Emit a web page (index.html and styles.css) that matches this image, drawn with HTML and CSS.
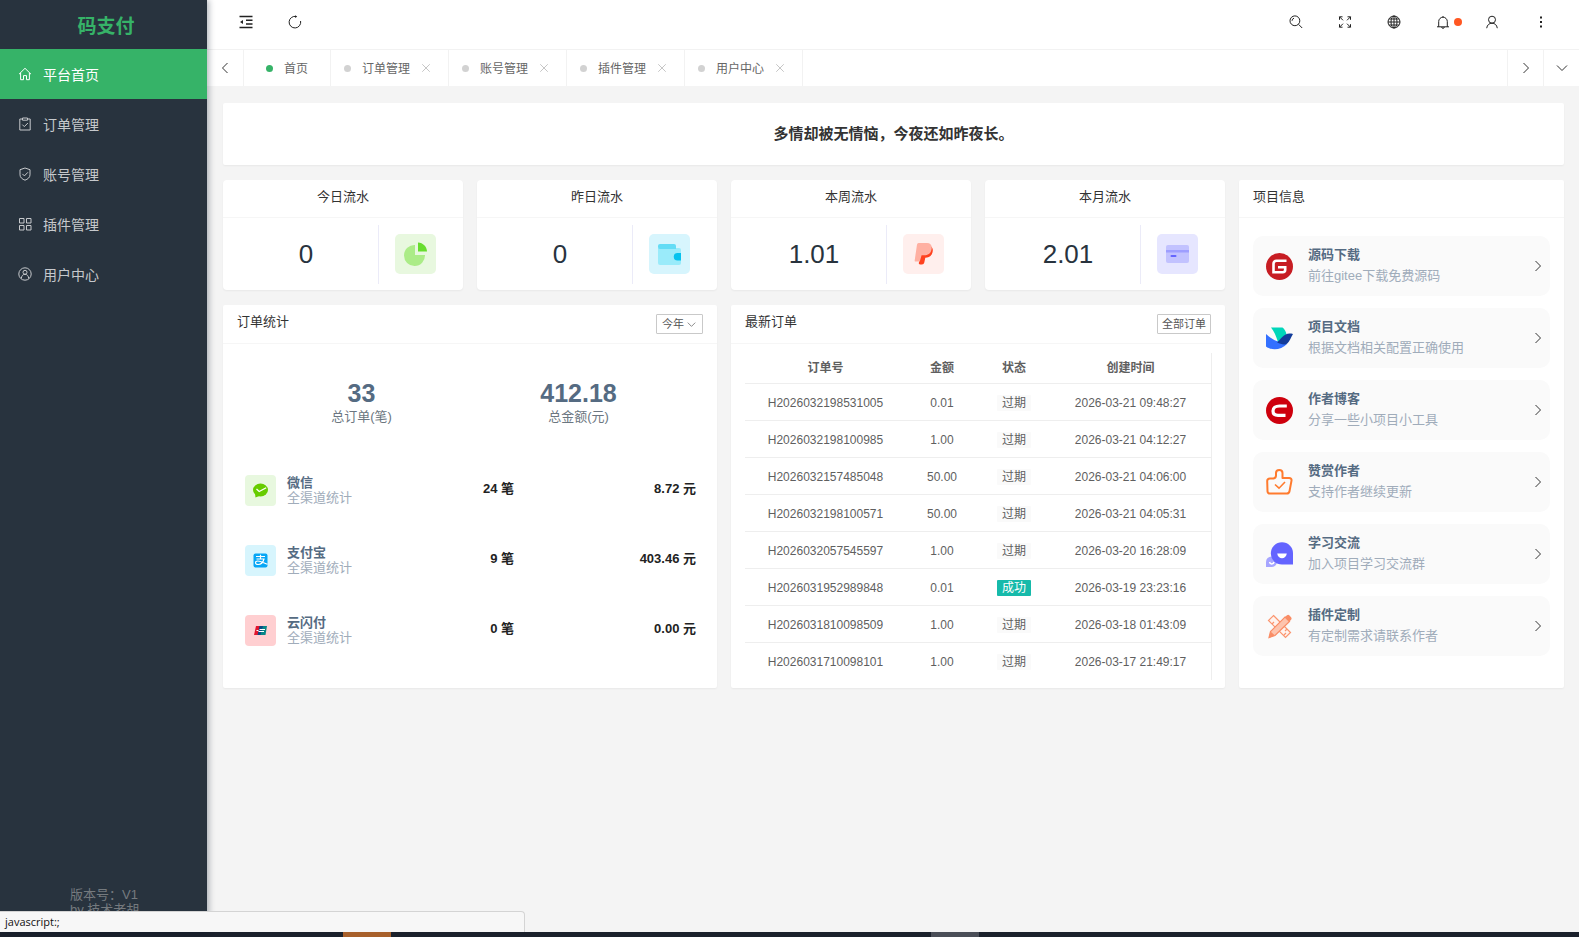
FILE: index.html
```html
<!doctype html>
<html lang="zh-CN">
  <head>
    <meta charset="UTF-8" />
    <meta name="viewport" content="width=device-width, initial-scale=1.0" />
    <title>码支付</title>
    <link rel="stylesheet" href="styles.css">
  </head>
  <body>
    <!-- shared icons -->
    <svg class="sprite" aria-hidden="true">
      <symbol id="right" viewBox="0 0 12 12"><path d="M3.5 1l5 5-5 5" /></symbol>
      <symbol id="left" viewBox="0 0 12 12"><path d="M8.5 1l-5 5 5 5" /></symbol>
      <symbol id="down" viewBox="0 0 12 12"><path d="M1 3.5l5 5 5-5" /></symbol>
      <symbol id="close" viewBox="0 0 12 12"><path d="M1.5 1.5l9 9M10.5 1.5l-9 9" /></symbol>
    </svg>

    <div class="app">
      <aside class="sidebar">
        <h1 class="logo">码支付</h1>
        <nav class="menu">
          <a class="active" href="#">
            <svg viewBox="0 0 14 14"><path d="M1 7.2L7 1.3l6 5.9M2.6 6v6.7h2.9V8.6h3v4.1h2.9V6" /></svg>
            平台首页
          </a>
          <a href="#">
            <svg viewBox="0 0 14 14"><path d="M4.5 2H1.8v11h10.4V2H9.5M4.5 1h5v2.2h-5zM4.3 7.6l2 2 3.6-3.6" /></svg>
            订单管理
          </a>
          <a href="#">
            <svg viewBox="0 0 14 14"><path d="M7 1l5 1.7v5.1c0 2.7-2.3 4.4-5 5.4-2.7-1-5-2.7-5-5.4V2.7zM4.4 6.9l2 2 3.5-3.6" /></svg>
            账号管理
          </a>
          <a href="#">
            <svg viewBox="0 0 14 14"><path d="M1.5 1.5H6V6H1.5zM8.5 1.5H13V6H8.5zM1.5 8.5H6V13H1.5zM8.5 8.5H13V13H8.5z" /></svg>
            插件管理
          </a>
          <a href="#">
            <svg viewBox="0 0 14 14"><circle cx="7" cy="7" r="6.2" /><circle cx="7" cy="5.3" r="2" /><path d="M3.3 11.5c.2-2.6 1.6-4.2 3.7-4.2s3.500 1.600 3.700 4.200" /></svg>
            用户中心
          </a>
        </nav>
        <p class="version">版本号：V1<br>by 技术老胡</p>
      </aside>

      <div class="content">
        <header class="topbar">
          <button type="button" aria-label="收起菜单">
            <svg class="fold" viewBox="0 0 14 14"><path d="M.5 1.500h13M7 5.300h6.500M7 8.900h6.500M.500 12.500h13" /><path class="solid" d="M1 7.100l3-2v4z" /></svg>
          </button>
          <button type="button" aria-label="刷新">
            <svg viewBox="0 0 14 14"><path d="M12.600 6A5.800 5.800 0 1 1 8.200 1.500" /><path class="solid" d="M7 .2l2.200 1.300L7.200 3z" /></svg>
          </button>
          <span class="spacer"></span>
          <button type="button" aria-label="搜索">
            <svg viewBox="0 0 14 14"><circle cx="5.900" cy="5.800" r="4.900" /><path d="M3 5.800A2.900 2.900 0 0 1 5 3.200M9.600 9.400l3.600 3.600" /></svg>
          </button>
          <button type="button" aria-label="全屏">
            <svg viewBox="0 0 14 14"><path d="M1.500 4.800V1.800h3M1.500 1.800l3.500 3.500M9.500 1.800h3v3M12.500 1.800L9 5.300M1.500 9.200v3h3M1.500 12.200L5 8.700M9.500 12.200h3v-3M12.500 12.200L9 8.700" /></svg>
          </button>
          <button type="button" aria-label="语言">
            <svg viewBox="0 0 14 14"><circle cx="7" cy="7" r="6" /><ellipse cx="7" cy="7" rx="3" ry="6" /><path d="M1 7h12M7 1v12M2 4h10M2 10h10" /></svg>
          </button>
          <button type="button" aria-label="消息">
            <svg viewBox="0 0 14 14"><path d="M1 11.800h12M2.700 11.800V6.500a4.300 4.300 0 0 1 8.600 0v5.300M7 1v1.200M5.700 12a1.300 1.300 0 0 0 2.600 0" /></svg>
            <span class="badge"></span>
          </button>
          <button type="button" aria-label="用户">
            <svg viewBox="0 0 14 14"><circle cx="7" cy="4.700" r="3.500" /><path d="M1.700 13.200c.4-3.300 2.600-5 5.300-5s4.900 1.700 5.300 5" /></svg>
          </button>
          <button type="button" aria-label="更多">
            <svg viewBox="0 0 14 14"><path class="solid" d="M6 1.500h2v2H6zM6 6h2v2H6zM6 10.500h2v2H6z" /></svg>
          </button>
        </header>

        <div class="tabs">
          <button type="button" class="tab-arrow" aria-label="向左"><svg><use href="#left" /></svg></button>
          <div class="tab home"><i></i><a href="#">首页</a></div>
          <div class="tab"><i></i><a href="#">订单管理</a><button type="button" aria-label="关闭"><svg><use href="#close" /></svg></button></div>
          <div class="tab"><i></i><a href="#">账号管理</a><button type="button" aria-label="关闭"><svg><use href="#close" /></svg></button></div>
          <div class="tab"><i></i><a href="#">插件管理</a><button type="button" aria-label="关闭"><svg><use href="#close" /></svg></button></div>
          <div class="tab"><i></i><a href="#">用户中心</a><button type="button" aria-label="关闭"><svg><use href="#close" /></svg></button></div>
          <span class="spacer"></span>
          <button type="button" class="tab-arrow end" aria-label="向右"><svg><use href="#right" /></svg></button>
          <button type="button" class="tab-arrow end" aria-label="展开"><svg><use href="#down" /></svg></button>
        </div>

        <main class="page">
          <section class="card notice">多情却被无情恼，今夜还如昨夜长。</section>

          <div class="dashboard">
            <div class="main-col">
              <section class="card flow">
                <h2>今日流水</h2>
                <div class="flow-body">
                  <strong>0</strong>
                  <span class="flow-icon">
                    <svg class="green" viewBox="0 0 41 40"><path fill="#abec87" d="M20 11v10h10a10.500 10.500 0 1 1-10-10z" /><path fill="#67dd2e" d="M23 8.500c5 .2 8.800 4.100 9 9h-9z" /></svg>
                  </span>
                </div>
              </section>
              <section class="card flow">
                <h2>昨日流水</h2>
                <div class="flow-body">
                  <strong>0</strong>
                  <span class="flow-icon">
                    <svg class="cyan" viewBox="0 0 41 40"><path fill="#9aebfa" d="M9 14h21q2 0 2 2v13q0 2-2 2H11q-2 0-2-2z" /><path fill="#64dcf5" d="M11 10h14q2 0 2 2v3H11q-2 0-2-2v-1q0-2 2-2z" /><path fill="#06c2ee" d="M32 19h-3.500a3.700 3.700 0 0 0 0 7.500H32z" /></svg>
                  </span>
                </div>
              </section>
              <section class="card flow">
                <h2>本周流水</h2>
                <div class="flow-body">
                  <strong>1.01</strong>
                  <span class="flow-icon">
                    <svg class="red" viewBox="0 0 41 40"><path fill="#ff421f" d="M28 12.500c2.300 1.500 2.300 5 .8 7.800-1.600 2.700-4 3.400-6.500 3.400l-1 4.700q-.4 2-2.300 2h-2q-1.500 0-1.200-1.500l2-8.400z" /><path fill="#ffb0a2" d="M15.500 9H24c3.500 0 5.300 2.500 4.600 6.200-.9 4.700-3.900 6-7.500 6h-2.500l-1.800 6.300H12.500q-1 0-.8-1.200L14 10.500Q14.300 9 15.500 9z" /></svg>
                  </span>
                </div>
              </section>
              <section class="card flow">
                <h2>本月流水</h2>
                <div class="flow-body">
                  <strong>2.01</strong>
                  <span class="flow-icon">
                    <svg class="violet" viewBox="0 0 41 40"><rect x="9" y="11" width="23" height="18" rx="2" fill="#c2c2ff" /><path fill="#9e9eff" d="M9 16h23v2.500H9z" /><rect x="13.500" y="21" width="6" height="2" rx="1" fill="#6464ff" /></svg>
                  </span>
                </div>
              </section>

              <section class="card stats">
                <div class="card-head">
                  <h2>订单统计</h2>
                  <div class="period">
                    <select aria-label="统计周期">
                      <option>今年</option>
                      <option>本月</option>
                    </select>
                    <svg><use href="#down" /></svg>
                  </div>
                </div>
                <div class="totals">
                  <div><strong>33</strong><span>总订单(笔)</span></div>
                  <div><strong>412.18</strong><span>总金额(元)</span></div>
                </div>
                <ul class="channels">
                  <li>
                    <svg class="wechat" viewBox="0 0 31 31"><ellipse cx="15.500" cy="15" rx="7.500" ry="6.500" fill="#67cc00" /><path fill="#67cc00" d="M10 18l.500 4.500 5-2z" /><path fill="none" stroke="#fff" stroke-width="1.300" d="M11.500 14l2.700 2.500 7-3.800" /></svg>
                    <div class="channel-name"><b>微信</b><span>全渠道统计</span></div>
                    <b class="amount">24 笔</b>
                    <b class="amount">8.72 元</b>
                  </li>
                  <li>
                    <svg class="alipay" viewBox="0 0 31 31"><rect x="8.500" y="8.500" width="14" height="14" rx="2" fill="#06a6f5" /><path fill="none" stroke="#fff" stroke-width="1.200" d="M11 11.500h9M15.500 9.800v4M11.500 14h7.500c-.8 2.800-3 5.500-5.800 5.500-3.600 0-3.400-3.500-.4-3.500 2.800 0 5.200 1.500 9.700 3.300" /></svg>
                    <div class="channel-name"><b>支付宝</b><span>全渠道统计</span></div>
                    <b class="amount">9 笔</b>
                    <b class="amount">403.46 元</b>
                  </li>
                  <li>
                    <svg class="unionpay" viewBox="0 0 31 31"><path fill="#e3142d" d="M11 11h5l-2 9H9z" /><path fill="#0a4a86" d="M14.500 11h4l-2 9h-4z" /><path fill="#068688" d="M18 11h4l-1.500 9h-5z" /><path fill="none" stroke="#fff" stroke-width="1" d="M11.500 15.500h2M14.500 14.500h5.500M13.500 16.500h5.500" /></svg>
                    <div class="channel-name"><b>云闪付</b><span>全渠道统计</span></div>
                    <b class="amount">0 笔</b>
                    <b class="amount">0.00 元</b>
                  </li>
                </ul>
              </section>

              <section class="card orders">
                <div class="card-head">
                  <h2>最新订单</h2>
                  <button type="button">全部订单</button>
                </div>
                <div class="table-wrap">
                  <table>
                    <thead>
                      <tr><th>订单号</th><th class="narrow">金额</th><th class="narrow">状态</th><th>创建时间</th></tr>
                    </thead>
                    <tbody>
                      <tr><td>H2026032198531005</td><td>0.01</td><td><span class="tag">过期</span></td><td>2026-03-21 09:48:27</td></tr>
                      <tr><td>H2026032198100985</td><td>1.00</td><td><span class="tag">过期</span></td><td>2026-03-21 04:12:27</td></tr>
                      <tr><td>H2026032157485048</td><td>50.00</td><td><span class="tag">过期</span></td><td>2026-03-21 04:06:00</td></tr>
                      <tr><td>H2026032198100571</td><td>50.00</td><td><span class="tag">过期</span></td><td>2026-03-21 04:05:31</td></tr>
                      <tr><td>H2026032057545597</td><td>1.00</td><td><span class="tag">过期</span></td><td>2026-03-20 16:28:09</td></tr>
                      <tr><td>H2026031952989848</td><td>0.01</td><td><span class="tag ok">成功</span></td><td>2026-03-19 23:23:16</td></tr>
                      <tr><td>H2026031810098509</td><td>1.00</td><td><span class="tag">过期</span></td><td>2026-03-18 01:43:09</td></tr>
                      <tr><td>H2026031710098101</td><td>1.00</td><td><span class="tag">过期</span></td><td>2026-03-17 21:49:17</td></tr>
                    </tbody>
                  </table>
                </div>
              </section>
            </div>

            <section class="card project">
              <h2>项目信息</h2>
              <div class="links">
                <a href="#">
                  <svg class="link-icon" viewBox="0 0 27 27"><circle cx="13.500" cy="13.500" r="13.500" fill="#c71d23" /><path fill="none" stroke="#fff" stroke-width="2.600" d="M20.500 7.800H10.500q-3 0-3 3v8.400h9.200q2.500 0 2.500-2.500v-2.500H12" /></svg>
                  <span class="link-text"><b>源码下载</b><span>前往gitee下载免费源码</span></span>
                  <svg class="arrow"><use href="#right" /></svg>
                </a>
                <a href="#">
                  <svg class="link-icon" viewBox="0 0 27 27"><path fill="#00d6b9" d="M5 2.500h11.500c2 1.600 3.500 4 4 6.800L12 17C10 11 8 6 5 2.500z" /><path fill="#3370ff" d="M0 9c5 4.500 9 7.700 21 10C15 25.500 5 25.500 0 21.500z" /><path fill="#133c9a" d="M27 9c-2 3.200-3.300 7.500-6 9.700-2.500 1.500-6.500.5-10-1.500 5-3.500 7-10.500 16-8.200z" /></svg>
                  <span class="link-text"><b>项目文档</b><span>根据文档相关配置正确使用</span></span>
                  <svg class="arrow"><use href="#right" /></svg>
                </a>
                <a href="#">
                  <svg class="link-icon" viewBox="0 0 27 27"><circle cx="13.500" cy="13.500" r="13.500" fill="#ce000d" /><path fill="none" stroke="#fff" stroke-width="3.200" d="M20.800 9H13.500c-4 0-6.500 2-6.500 5 0 2.800 1.700 4.300 5 4.300h7.500" /></svg>
                  <span class="link-text"><b>作者博客</b><span>分享一些小项目小工具</span></span>
                  <svg class="arrow"><use href="#right" /></svg>
                </a>
                <a href="#">
                  <svg class="link-icon" viewBox="0 0 27 27"><path fill="none" stroke="#ff7b2e" stroke-width="2" stroke-linejoin="round" d="M4 9.500h3.500q2.500-.5 2.500-3V4c0-4 6.500-4 6.500 0v5h6.700c1.500 0 2.600 1 2.300 2.700l-2 10.500q-.4 2.300-2.700 2.300H4q-2.300 0-2.500-2.200L1.200 12q0-2.500 2.800-2.500z" /><path fill="none" stroke="#ff7b2e" stroke-width="1.600" d="M9 15.500l4 3.700 6-6.200" /></svg>
                  <span class="link-text"><b>赞赏作者</b><span>支持作者继续更新</span></span>
                  <svg class="arrow"><use href="#right" /></svg>
                </a>
                <a href="#">
                  <svg class="link-icon" viewBox="0 0 27 27"><path fill="#a6a5ff" d="M5.500 15.500a5.300 5.300 0 1 1 .5 10.600H0V21a5.500 5.500 0 0 1 5.500-5.500z" /><path fill="none" stroke="#fff" stroke-width="1.500" d="M3.500 21c.5 2.500 4 2.500 4.500 0" /><path fill="#6464ff" d="M16 1.200c6 0 11 4.800 11 10.800v11.500H16A11 11 0 0 1 16 1.200z" /><path fill="#fff" d="M11.200 12.500h9.600c-.7 6.400-8.900 6.400-9.600 0z" /></svg>
                  <span class="link-text"><b>学习交流</b><span>加入项目学习交流群</span></span>
                  <svg class="arrow"><use href="#right" /></svg>
                </a>
                <a href="#">
                  <svg class="link-icon" viewBox="0 0 27 27"><path fill="#fff3ee" stroke="#fb956f" stroke-width="1.200" d="M7.500 2.500l17 17-5 5-17-17zM6 11l2-2M9.500 14.500l2-2M18 22l2-2M21 16l-2 2" /><path fill="#fdc4ae" stroke="#f98d66" stroke-width="1.200" d="M19 4l4.500 4.500L9 22.500l-6 2 1.500-6z" /><path fill="#f98d66" d="M19 4l2-1.800q1.300-.8 2.500.3l1.600 1.700q1 1.300 0 2.500l-1.600 1.800zM4.500 18.500L9 22.500l-6 2z" /></svg>
                  <span class="link-text"><b>插件定制</b><span>有定制需求请联系作者</span></span>
                  <svg class="arrow"><use href="#right" /></svg>
                </a>
              </div>
            </section>
          </div>
        </main>
      </div>

      <div class="status">javascript:;</div>
    </div>

    <div class="taskbar"><i class="running"></i><i class="current"></i></div>
  </body>
</html>
```
FILE: styles.css
```css
* {
  box-sizing: border-box;
}

body {
  margin: 0;
  height: 100vh;
  display: flex;
  flex-direction: column;
  font-family: "Liberation Sans", "Noto Sans CJK SC", sans-serif;
  font-size: 13px;
  color: #333;
  background-color: #f4f4f4;
}

h1, h2, p, ul {
  margin: 0;
  padding: 0;
}

a {
  color: inherit;
  text-decoration: none;
}

button {
  border: none;
  padding: 0;
  background: none;
  font-family: inherit;
  cursor: pointer;
}

svg {
  display: block;
  flex: none;
}

.sprite {
  position: absolute;
  width: 0;
  height: 0;
}

.spacer {
  flex: 1;
}

.app {
  flex: 1;
  min-height: 0;
  display: flex;
  position: relative;
}

/* Sidebar */
.sidebar {
  width: 207px;
  flex: none;
  display: flex;
  flex-direction: column;
  background-color: #28333e;
  box-shadow: 2px 0 6px rgba(0, 21, 41, 0.3);
  z-index: 1;
}

.logo {
  height: 49px;
  padding-left: 5px;
  line-height: 54px;
  text-align: center;
  font-size: 19px;
  color: #36b368;
}

.menu {
  flex: 1;
}

.menu a {
  display: flex;
  align-items: center;
  gap: 11px;
  height: 50px;
  padding-left: 18px;
  font-size: 14px;
  color: #c6c9cc;
}

.menu a.active {
  background-color: #36b368;
  color: #fff;
}

.menu svg {
  width: 14px;
  height: 14px;
  fill: none;
  stroke: currentColor;
}

.version {
  padding: 0 0 15px 70px;
  line-height: 15px;
  color: #757a7e;
}

/* Top bar */
.content {
  flex: 1;
  min-width: 0;
  display: flex;
  flex-direction: column;
}

.topbar {
  display: flex;
  height: 50px;
  padding: 0 14px 5px 14px;
  background-color: #fff;
  border-bottom: 1px solid #f2f2f2;
}

.topbar button {
  position: relative;
  display: flex;
  align-items: center;
  justify-content: center;
  width: 49px;
}

.topbar svg {
  width: 14px;
  height: 14px;
  fill: none;
  stroke: #222;
  stroke-width: 1;
}

.topbar .fold {
  stroke-width: 1.5;
}

.topbar .solid {
  fill: #222;
  stroke: none;
}

.badge {
  position: absolute;
  top: 18px;
  right: 5px;
  width: 8px;
  height: 8px;
  border-radius: 50%;
  background-color: #ff5722;
}

/* Tabs */
.tabs {
  display: flex;
  height: 36px;
  background-color: #fff;
}

.tab-arrow {
  display: flex;
  align-items: center;
  justify-content: center;
  width: 37px;
  border-right: 1px solid #f2f2f2;
}

.tab-arrow.end {
  width: 36px;
  border-right: none;
  border-left: 1px solid #f2f2f2;
}

.tab-arrow svg {
  width: 12px;
  height: 12px;
  fill: none;
  stroke: #333;
}

.tab {
  display: flex;
  align-items: center;
  gap: 11px;
  padding: 0 17px 0 13px;
  border-right: 1px solid #f2f2f2;
  font-size: 12px;
  color: #666;
}

.tab a {
  padding-bottom: 2px;
}

.tab i {
  width: 7px;
  height: 7px;
  border-radius: 50%;
  background-color: #d2d2d2;
}

.tab.home {
  padding: 0 22px;
}

.tab.home i {
  background-color: #36b368;
}

.tab svg {
  width: 10px;
  height: 10px;
  fill: none;
  stroke: #bbb;
}

/* Page */
.page {
  flex: 1;
  padding: 17px 15px 0 16px;
}

.card {
  background-color: #fff;
  border-radius: 2px;
  box-shadow: 0 1px 2px rgba(0, 0, 0, 0.05);
}

.card h2 {
  font-size: 13px;
  font-weight: normal;
  line-height: 34px;
}

.notice {
  height: 62px;
  line-height: 62px;
  text-align: center;
  font-size: 15px;
  font-weight: bold;
}

.dashboard {
  display: grid;
  grid-template-columns: minmax(0, 1fr) 325px;
  gap: 14px;
  margin-top: 15px;
}

.main-col {
  display: grid;
  grid-template-columns: repeat(4, minmax(0, 1fr));
  gap: 15px 14px;
}

.flow {
  border-radius: 4px;
}

.flow h2, .project h2 {
  height: 38px;
  border-bottom: 1px solid #f6f6f6;
}

.flow h2 {
  text-align: center;
}

.flow-body {
  display: flex;
  height: 72px;
  padding: 7px 11px 6px;
}

.flow-body strong {
  flex: 1;
  border-right: 1px solid #ebebf8;
  line-height: 58px;
  text-align: center;
  font-size: 26px;
  font-weight: normal;
  color: #28333e;
}

.flow-icon {
  display: flex;
  align-items: center;
  justify-content: center;
  width: 73px;
  padding-bottom: 2px;
}

.flow-icon svg {
  width: 41px;
  height: 40px;
  border-radius: 5px;
}

.green, .wechat {
  background-color: #e8f8df;
}

.cyan, .alipay {
  background-color: #d7f5fd;
}

.red {
  background-color: #ffefed;
}

.violet {
  background-color: #e6e6ff;
}

.unionpay {
  background-color: #ffcfd1;
}

.stats, .orders {
  grid-column: span 2;
}

.card-head {
  display: flex;
  justify-content: space-between;
  height: 39px;
  padding: 0 14px;
  border-bottom: 1px solid #f6f6f6;
}

.card-head button, .card-head select {
  height: 20px;
  margin: 9px 0 0;
  padding: 0 5px;
  border: 1px solid #c9c9c9;
  border-radius: 1px;
  background-color: #fff;
  font-family: inherit;
  font-size: 11px;
  line-height: 18px;
  color: #555;
}

.card-head button {
  padding: 0 4px;
}

.period {
  position: relative;
}

.card-head select {
  appearance: none;
  width: 47px;
}

.period svg {
  position: absolute;
  top: 15px;
  right: 7px;
  width: 9px;
  height: 9px;
  fill: none;
  stroke: #666;
  pointer-events: none;
}

/* Order statistics */
.totals {
  display: grid;
  grid-template-columns: 1fr 1fr;
  padding: 34px 30px 0;
  text-align: center;
}

.totals strong {
  display: block;
  font-size: 25px;
  line-height: 30px;
  color: #556b82;
}

.totals span {
  display: block;
  line-height: 18px;
  color: #6b7680;
}

.channels {
  display: flex;
  flex-direction: column;
  gap: 39px;
  padding: 49px 21px 0 22px;
  list-style: none;
}

.channels li {
  display: grid;
  grid-template-columns: 31px 1fr 80px 182px;
  height: 31px;
  color: #222;
}

.channels svg {
  width: 31px;
  height: 31px;
  border-radius: 4px;
}

.amount {
  line-height: 27px;
  text-align: right;
}

.channel-name {
  display: flex;
  flex-direction: column;
  justify-content: flex-end;
  padding: 0 0 4px 11px;
  line-height: 15px;
  color: #556b82;
}

.channel-name span {
  color: #a0acba;
}

/* Latest orders */
.table-wrap {
  padding: 9px 13px 8px 14px;
}

table {
  width: 100%;
  table-layout: fixed;
  border-collapse: separate;
  border-spacing: 0;
  border-right: 1px solid #eee;
  font-size: 12px;
  color: #5f5f5f;
}

th, td {
  height: 37px;
  padding: 1px 0 0;
  text-align: center;
  border-bottom: 1px solid #eee;
}

th {
  height: 31px;
  padding: 0 0 3px;
}

tr:last-child td {
  border-bottom: none;
}

.narrow {
  width: 72px;
}

.tag {
  display: inline-block;
  padding: 0 5px;
  border-radius: 1px;
  line-height: 16px;
  background-color: #fafafa;
}

.tag.ok {
  background-color: #16baaa;
  color: #fff;
}

/* Project links */
.project h2 {
  padding-left: 14px;
}

.links {
  display: flex;
  flex-direction: column;
  gap: 12px;
  padding: 18px 14px 0;
}

.links a {
  display: flex;
  align-items: center;
  height: 60px;
  padding: 0 6px 0 13px;
  border-radius: 10px;
  background-color: #fafafa;
}

.link-icon {
  width: 27px;
  height: 27px;
}

.link-text {
  flex: 1;
  display: flex;
  flex-direction: column;
  padding: 0 0 3px 15px;
  line-height: 21px;
  color: #556b82;
}

.link-text span {
  color: #a0acba;
}

.arrow {
  width: 12px;
  height: 12px;
  fill: none;
  stroke: #333;
}

/* Link preview and taskbar */
.status {
  position: absolute;
  left: 0;
  bottom: 0;
  z-index: 2;
  width: 525px;
  height: 21px;
  padding-left: 5px;
  border: 1px solid #d4d4d4;
  border-width: 1px 1px 0 0;
  border-radius: 0 4px 0 0;
  background-color: #f7f7f7;
  font-family: "Open Sans", sans-serif;
  font-size: 11px;
  line-height: 20px;
  color: #111;
}

.taskbar {
  display: flex;
  gap: 540px;
  height: 5px;
  padding-left: 343px;
  background-color: #1b212c;
}

.taskbar i {
  width: 48px;
}

.running {
  background-color: #a8602b;
}

.current {
  background-color: #4a4e57;
}
```
